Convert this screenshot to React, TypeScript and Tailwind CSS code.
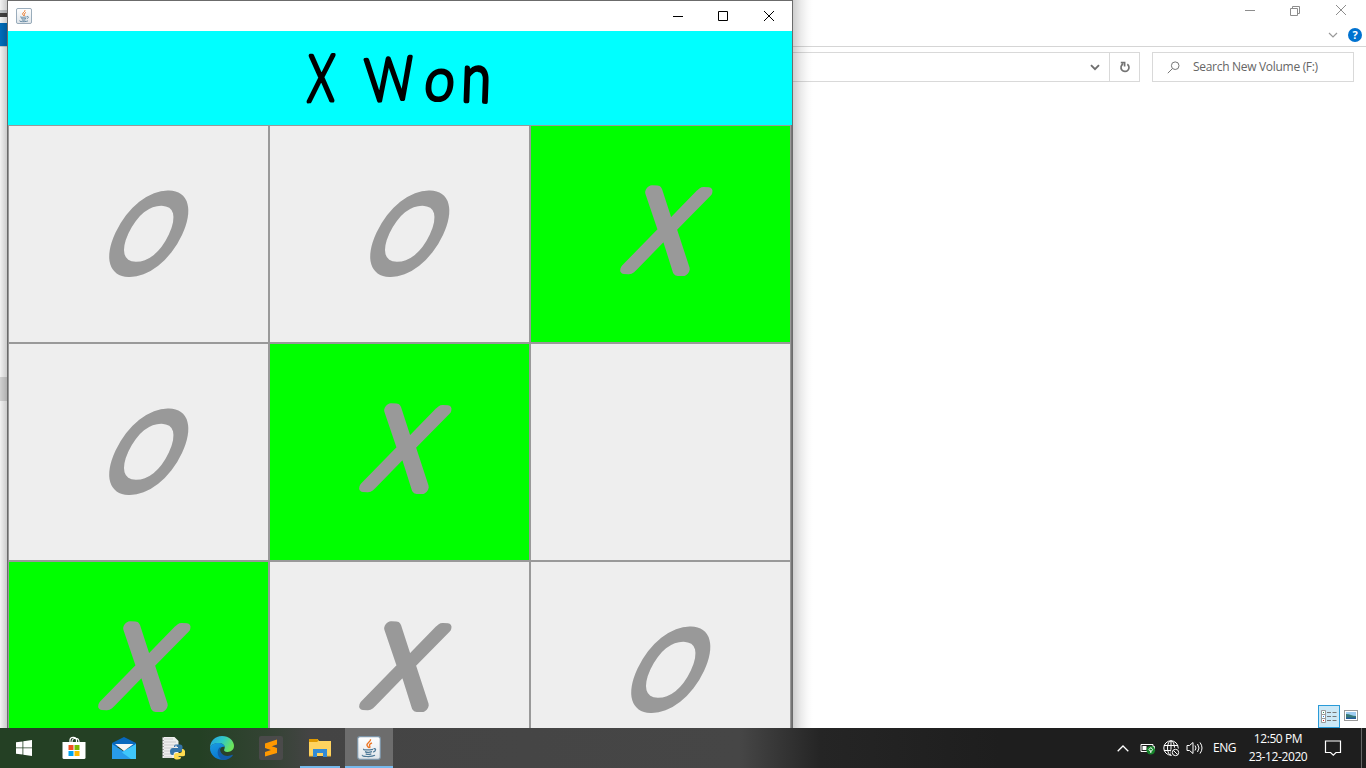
import React from "react";

type Mark = "X" | "O" | "";

const board: { mark: Mark; win: boolean }[] = [
  { mark: "O", win: false },
  { mark: "O", win: false },
  { mark: "X", win: true },
  { mark: "O", win: false },
  { mark: "X", win: true },
  { mark: "", win: false },
  { mark: "X", win: true },
  { mark: "X", win: false },
  { mark: "O", win: false },
];

function JavaIcon({ size }: { size: number }) {
  return (
    <svg width={size} height={size} viewBox="0 0 24 24">
      <defs>
        <linearGradient id="javabg" x1="0" y1="0" x2="0" y2="1">
          <stop offset="0" stopColor="#fff" />
          <stop offset="1" stopColor="#dfe5ea" />
        </linearGradient>
      </defs>
      <rect x=".7" y=".7" width="22.6" height="22.6" rx="2.2" fill="url(#javabg)" stroke="#7d95a8" strokeWidth="1.2" />
      <path d="M13.5 3.2c.8 2.4-4.4 3.6-3.5 6.2.3 1 1.5 1.7 1.8 2.6M15 6.8c-2.3 1-3 2-2.3 3.2.4.8.2 1.4-.2 2" fill="none" stroke="#ec7524" strokeWidth="1.4" />
      <path d="M7 13c-2 1 4 1.300 9 .3M8 15.600c1.500.8 5 .8 7 .1M8.700 17.900c1.300.6 4 .6 5.600 0M16.500 12.800c2.800-.7 2.800 2.200-.3 3.300M5.500 19c-1.500 1.700 9 2.200 12.500.3" fill="none" stroke="#4d7896" strokeWidth="1.250" />
    </svg>
  );
}

function Explorer() {
  return (
    <section className="flex h-[728px] w-full flex-col bg-white">
      <div className="flex h-[23px] items-start justify-between">
        <div className="mt-[10px] h-[7px] w-[8px] border-t-[3px] border-[#c9cdd0] bg-[#444]" />
        <svg className="mr-[16px] mt-[3px]" width="106" height="14" viewBox="0 0 106 14" fill="none" stroke="#8d8d8d">
          <path d="M1 7.500h10M46.500 5.500h7v7h-7zM48.500 5.500v-2h7v7h-2M92 2l10 10M102 2L92 12" />
        </svg>
      </div>
      <div className="flex h-[24px] justify-between border-b border-[#d5d5d5]">
        <div className="h-[23px] w-[8px] bg-[#0072c4]" />
        <div className="flex items-center gap-[10px] pr-[4px]">
          <svg width="10" height="6" viewBox="0 0 10 6" fill="none" stroke="#999" strokeWidth="1.200"><path d="M1 1l4 4 4-4" /></svg>
          <span className="flex h-[14px] w-[14px] items-center justify-center rounded-full bg-[#0072d0] font-['Open_Sans',sans-serif] text-[11px] font-bold leading-none text-white">?</span>
        </div>
      </div>
      <div className="mt-[5px] flex h-[30px] gap-[12px] pl-[20px] pr-[12px]">
        <div className="flex flex-1 justify-end border border-[#d9d9d9]">
          <div className="flex w-[29px] items-center justify-center border-r border-[#d9d9d9]">
            <svg width="10" height="7" viewBox="0 0 10 7" fill="none" stroke="#6f6f6f" strokeWidth="1.900"><path d="M1 1.200l4 4 4-4" /></svg>
          </div>
          <div className="flex w-[29px] items-center justify-center">
            <svg width="12" height="12" viewBox="0 0 12 12" fill="none" stroke="#737373" strokeWidth="1.700"><path d="M8.300 3.200A4 4 0 1 1 4 3M1.800 1.600h3.800v4" /></svg>
          </div>
        </div>
        <div className="flex w-[202px] items-center border border-[#d9d9d9] pl-[14px]">
          <svg width="13" height="13" viewBox="0 0 13 13" fill="none" stroke="#777"><circle cx="8.200" cy="4.700" r="3.800" /><path d="M5.500 7.500L.8 12.200" /></svg>
          <span className="ml-[13px] whitespace-nowrap font-['Open_Sans',sans-serif] text-[12px] tracking-[-0.3px] text-[#666]">Search New Volume (F:)</span>
        </div>
      </div>
      <div className="flex flex-1 items-start">
        <div className="mt-[295px] h-[24px] w-[8px] bg-[#dcdcdc]" />
      </div>
      <div className="flex h-[23px] items-start justify-end gap-[4px] pr-[8px]">
        <div className="flex h-[23px] w-[22px] items-center justify-center border border-[#2a9bd8] bg-[#cce8f6]">
          <svg width="16" height="14" viewBox="0 0 16 14" fill="none">
            <path d="M.5.500h4v4h-4zM.5 4.500h4v4h-4zM.5 8.500h4v4h-4z" fill="#fff" stroke="#999" />
            <path d="M6 2.500h4M11.500 2.500h4M6 6.500h4M11.500 6.500h4M6 10.500h4M11.500 10.500h4" stroke="#777" />
            <path d="M2 2.500h1" stroke="#3c8f5a" /><path d="M2 6.500h1" stroke="#2080e0" /><path d="M2 10.500h1" stroke="#d02020" />
          </svg>
        </div>
        <svg className="mt-[5px]" width="14" height="11" viewBox="0 0 14 11">
          <rect x=".5" y=".5" width="13" height="10" fill="#fff" stroke="#9a9a9a" />
          <path d="M2 2h10v7H2z" fill="#9fcdf2" /><path d="M2 4c4 0 6 2 10 2v3H2z" fill="#397a77" /><path d="M2 7.500h10V9H2z" fill="#245c9a" />
        </svg>
      </div>
    </section>
  );
}

function GameWindow() {
  return (
    <section className="absolute left-[7px] top-0 flex h-[728px] w-[786px] flex-col border-x border-t border-[#6b6b6b] bg-[#777]">
      <header className="flex h-[30px] shrink-0 items-center justify-between bg-white pl-[8px]">
        <JavaIcon size={16} />
        <svg className="mr-[16px]" width="104" height="12" viewBox="0 0 104 12" fill="none" stroke="#000">
          <path d="M1 6.500h10M46.500 1.500h9v9h-9zM92 1l10 10M102 1L92 11" />
        </svg>
      </header>
      <h1 className="flex h-[94px] shrink-0 items-center justify-center bg-[#0ff]">
        <svg width="784" height="94" viewBox="0 0 784 94" className="font-['Lato',sans-serif] text-[64px] font-light" fill="#000" stroke="#000" strokeWidth="3.8" strokeLinejoin="round">
          <text textAnchor="middle" transform="translate(312.500 70) rotate(-2) skewX(-4) scale(.68 1.01)">X</text>
          <text textAnchor="middle" transform="translate(383 69) rotate(-4) scale(.75 .93)">W</text>
          <text textAnchor="middle" transform="translate(430 68.500) skewX(-6) scale(.84 .92)">o</text>
          <text textAnchor="middle" transform="translate(467.500 70.500) rotate(2) scale(.84 1.06)">n</text>
        </svg>
      </h1>
      <div className="grid shrink-0 grid-cols-[repeat(3,261px)] grid-rows-[218px_218px_167px]">
        {board.map((c, i) => (
          <div key={i} className={`flex items-start justify-center border-x border-t border-[#999] ${i < 6 ? "border-b" : ""} ${c.win ? "bg-[#0f0]" : "bg-[#eee]"}`}>
            <svg width="259" height={i < 6 ? 216 : 166} className="overflow-visible font-['Lato',sans-serif] text-[110px] font-light" fill="#999" stroke="#999" strokeWidth="11" strokeLinejoin="round">
              {c.mark === "X" && <text textAnchor="middle" transform="translate(124 143.500) rotate(2) skewX(-15) scale(.92 1.01)">X</text>}
              {c.mark === "O" && <text textAnchor="middle" transform="translate(122.500 145) rotate(2) skewX(-23) scale(.78 .97)">O</text>}
            </svg>
          </div>
        ))}
      </div>
    </section>
  );
}

function Taskbar() {
  return (
    <footer className="relative flex h-[40px] w-full items-stretch bg-[linear-gradient(90deg,#244024_0px,#244024_200px,#344334_270px,#444_310px,#464646_740px,#252525_820px,#1e1e1e_1000px,#1e1e1e_1366px)] font-['Open_Sans',sans-serif] text-white">
      <div className="flex w-[48px] items-center justify-center">
        <svg width="16" height="16" viewBox="0 0 16 16" fill="#fff"><path d="M0 2.300L6.500 1.400v6.100H0zM7.300 1.300L16 0v7.500H7.300zM0 8.300h6.500v6.300L0 13.700zM7.300 8.300H16V16l-8.700-1.300z" /></svg>
      </div>
      <div className="flex w-[52px] items-center justify-center">
        <svg width="24" height="24" viewBox="0 0 24 24">
          <path d="M8 7V4c0-3 6-4 6.500 0v3M10 6c0-5 7-5 7 0v1" fill="none" stroke="#fff" strokeWidth="1.200" />
          <path d="M.5 6h23v15.500q0 1.500-1.500 1.500H2Q.5 23 .5 21.500z" fill="#fff" />
          <path d="M6.500 9h5v5h-5z" fill="#f25022" /><path d="M12.500 9h5v5h-5z" fill="#7fba00" /><path d="M6.500 15h5v5h-5z" fill="#00a4ef" /><path d="M12.500 15h5v5h-5z" fill="#ffb900" />
        </svg>
      </div>
      <div className="flex w-[48px] items-center justify-center">
        <svg width="24" height="24" viewBox="0 0 24 24">
          <path d="M0 7L12 1l12 6v4H0z" fill="#0868bd" /><path d="M0 8l11 7L24 8v15H0z" fill="#289be8" /><path d="M24 8L10 16.500l9 6.500h5z" fill="#3fc7fa" /><path d="M3 8h18.500L12 15z" fill="#f5f5f5" />
        </svg>
      </div>
      <div className="flex w-[50px] items-center justify-center">
        <svg width="24" height="26" viewBox="0 0 24 26">
          <path d="M1.500 2h12l4 4v17h-16z" fill="#eee" /><path d="M3 4h9M3 7h12M3 10h12M3 13h10M3 16h8M3 19h8M3 22h8" stroke="#ccc" />
          <path d="M2 2v21" stroke="#555" strokeDasharray="1 2" />
          <path d="M15 9.500h4q2.500 0 2.500 2.500v3q0 2-2.500 2h-4q-2.500 0-2.500 3h-1q-2.500 0-2.500-3.500t3-3.500h5v-1h-4v-.5q0-2 2-2z" fill="#3674a9" />
          <path d="M22 14h-1v2q0 2-2.500 2h-3q-2.500 0-2.500 2.500v2q0 2 3.500 2t3.500-2.500h-3v-.8h5q2.500 0 2.500-3T22 14z" fill="#ffdc50" /><circle cx="15" cy="11.200" r=".8" fill="#fff" />
        </svg>
      </div>
      <div className="flex w-[48px] items-center justify-center">
        <svg width="24" height="24" viewBox="0 0 24 24">
          <defs>
            <linearGradient id="edgetop" x1="0" y1="0" x2="1" y2=".4"><stop stopColor="#229dea" /><stop offset=".55" stopColor="#32c8c6" /><stop offset="1" stopColor="#6be45c" /></linearGradient>
            <linearGradient id="edgeleft" x1="0" y1="0" x2=".5" y2="1"><stop stopColor="#1b9de2" /><stop offset="1" stopColor="#0875cf" /></linearGradient>
          </defs>
          <path d="M0 12C0 5 5 0 12 0c7 0 12 5 12 9.800 0 4-3 6.200-6.500 6.200-3 0-4-1.500-3.200-2.700C16 10 13 7 8.500 7 4 7 .5 9.500 0 12z" fill="url(#edgetop)" />
          <path d="M0 12c.5-3 4-5 8.500-5 3.500 0 6 2 6.300 4C11 9.500 8 14 10.500 18c1.500 2.800 4 4.600 6.500 5C8 26 0 20 0 12z" fill="url(#edgeleft)" />
          <path d="M11 10.500c-2.800 4.500 1.500 9.500 6.500 9.500 2 0 3.500-.6 4.500-1.200.7-.3 1 .1.700.6C21 22 17 24 14 24 8 23.500 5 14 11 10.500z" fill="#125ca8" />
        </svg>
      </div>
      <div className="flex w-[50px] items-center justify-center">
        <svg width="24" height="24" viewBox="0 0 24 24"><rect width="24" height="24" rx="2" fill="#4a4a4a" /><path d="M18 3.500v5l-6 2 6 2v4.500L6 20.500v-4.500l6-2-6-2V7.500z" fill="#ff9800" /><path d="M6 11.500l12 4V12l-6-2z" fill="#ff9800" /></svg>
      </div>
      <div className="ml-[4px] flex w-[40px] items-center justify-center border-b-2 border-[#76b9ed] pt-[2px]">
        <svg width="22" height="20" viewBox="0 0 22 20"><path d="M0 1h8.500l1.500 2H22v15H0z" fill="#ffd35f" /><path d="M0 1h8.500l1 1.800L8 4H0z" fill="#df9900" /><path d="M4 11h14v8h-4v-4H8v4H4z" fill="#338bd5" /><path d="M0 18h4M18 18h4" stroke="#f0b634" /></svg>
      </div>
      <div className="ml-[5px] flex w-[48px] items-center justify-center border-b-2 border-[#76b9ed] bg-[#6d6d6d] pt-[2px]">
        <JavaIcon size={24} />
      </div>
      <div className="ml-auto flex items-center">
        <svg width="12" height="7" viewBox="0 0 12 7" fill="none" stroke="#fff" strokeWidth="1.300"><path d="M.7 6.300L6 1l5.300 5.300" /></svg>
        <svg className="ml-[11px]" width="16" height="14" viewBox="0 0 16 14"><path d="M1 3.500h12v7H1zM13.500 5.500h1v3" fill="none" stroke="#fff" /><path d="M2.500 5h4v4h-4z" fill="#fff" /><circle cx="10.800" cy="9.300" r="4.300" fill="#16852b" /><path d="M10.800 12V9.500M9 8.500c0 2 3.600 2 3.600 0l-1.800-2z" fill="none" stroke="#fff" /></svg>
        <svg className="ml-[7px]" width="17" height="17" viewBox="0 0 17 17" fill="none" stroke="#fff"><circle cx="8" cy="8" r="7.200" /><ellipse cx="8" cy="8" rx="3.500" ry="7.200" /><path d="M1 5.500h14M1 10.500h14M8 1v14" /><circle cx="12.500" cy="12.500" r="4.500" fill="#1e1e1e" stroke="#1e1e1e" /><circle cx="12.500" cy="12.500" r="3.200" /><path d="M10.400 10.400l4.200 4.200" /></svg>
        <svg className="ml-[6px]" width="18" height="14" viewBox="0 0 18 14" fill="none" stroke="#fff"><path d="M1 4.500h2.500l3.500-3v11l-3.500-3H1zM9 4.500q2 2.500 0 5M11.500 3q3 4 0 8M14 1.500q4 5.500 0 11" /></svg>
        <span className="ml-[9px] w-[24px] whitespace-nowrap text-[12px] tracking-[-0.5px]">ENG</span>
        <div className="ml-[7px] flex w-[68px] flex-col items-center whitespace-nowrap text-[12px] leading-[18px] tracking-[-0.4px]">
          <span>12:50 PM</span><span>23-12-2020</span>
        </div>
        <svg className="ml-[12px]" width="18" height="18" viewBox="0 0 18 18" fill="none" stroke="#fff" strokeWidth="1.200"><path d="M1.500 2h15v11.500H12l-2.700 2.700-2.700-2.700H1.500z" /></svg>
        <div className="ml-[19px] mr-[4px] h-[40px] w-px bg-[#666]" />
      </div>
    </footer>
  );
}

export default function App() {
  return (
    <main className="relative flex h-[768px] w-[1366px] flex-col overflow-hidden bg-white">
      <div className="relative h-[728px]">
        <Explorer />
        <div className="absolute left-[793px] top-0 h-[728px] w-[20px] bg-[linear-gradient(90deg,rgba(0,0,0,.19),rgba(0,0,0,.08)_40%,rgba(0,0,0,.02)_75%,transparent)]" />
        <div className="absolute left-0 top-0 h-[728px] w-[7px] bg-gradient-to-r from-black/5 to-black/20" />
        <GameWindow />
      </div>
      <Taskbar />
    </main>
  );
}
